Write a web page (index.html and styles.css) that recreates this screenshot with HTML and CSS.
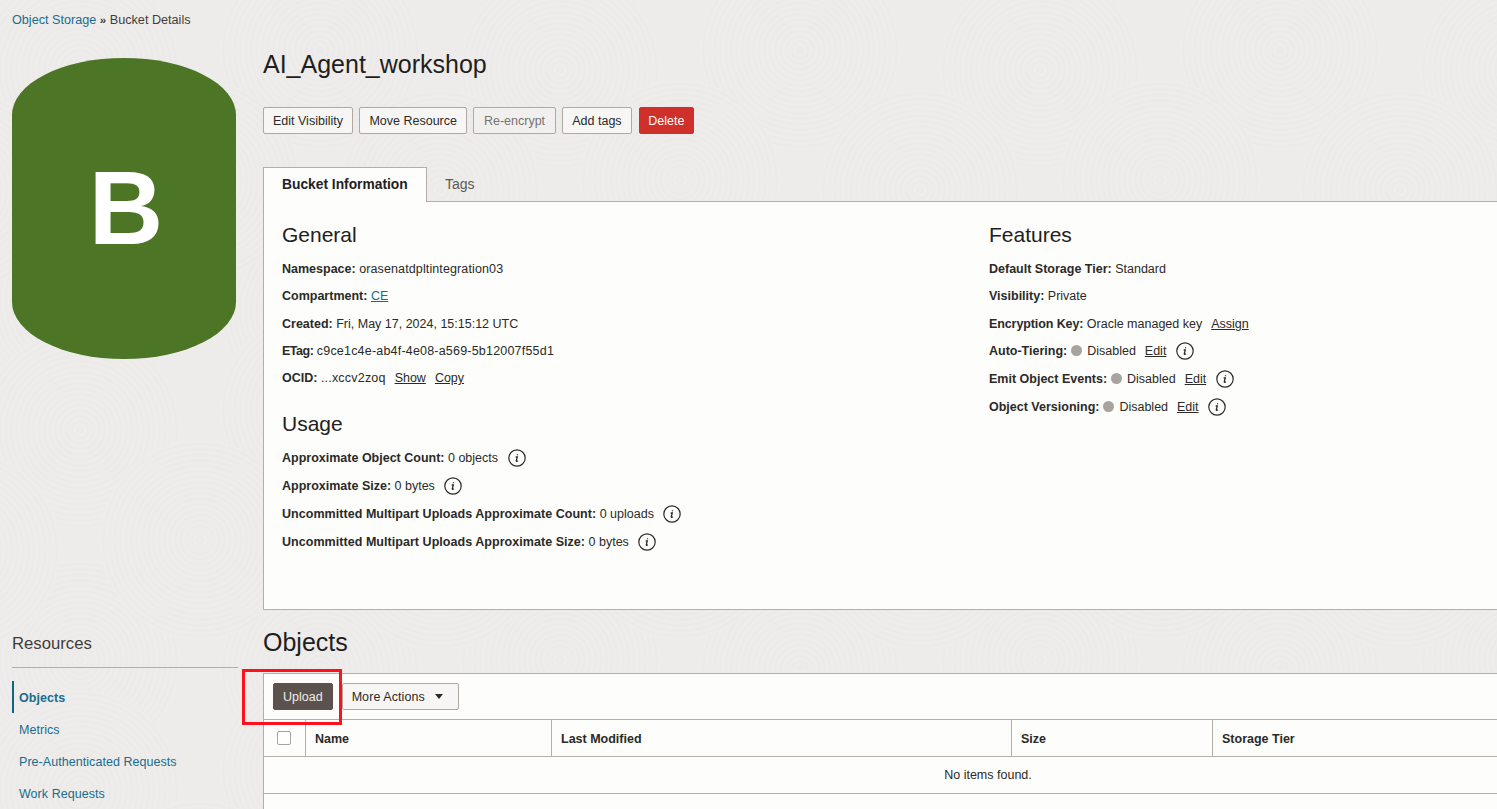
FILE: index.html
```html
<!DOCTYPE html>
<html lang="en">
<head>
<meta charset="utf-8">
<title>Bucket Details</title>
<link rel="stylesheet" href="styles.css">
</head>
<body>
<svg class="defs" width="0" height="0" aria-hidden="true">
  <symbol id="info" viewBox="0 0 18 18">
    <circle cx="9" cy="9" r="8.2" fill="none" stroke="#2b2a28" stroke-width="1.2"/>
    <path d="M9.5 5.3v.9M7.7 8h1.6l-1 3.6c-.2.8.5 1 1.6.2" fill="none" stroke="#2b2a28" stroke-width="1.3"/>
  </symbol>
</svg>
<nav class="crumbs"><a href="#">Object Storage</a> <span class="sep">»</span> Bucket Details</nav>
<div class="layout">
  <aside class="side">
    <div class="bucket">B</div>
    <h2 class="res-title">Resources</h2>
    <ul class="res-list">
      <li class="active"><a href="#">Objects</a></li>
      <li><a href="#">Metrics</a></li>
      <li><a href="#">Pre-Authenticated Requests</a></li>
      <li><a href="#">Work Requests</a></li>
    </ul>
  </aside>
  <main class="main">
    <h1 class="title">AI_Agent_workshop</h1>
    <div class="actions">
      <button class="btn">Edit Visibility</button>
      <button class="btn move">Move Resource</button>
      <button class="btn off">Re-encrypt</button>
      <button class="btn tags">Add tags</button>
      <button class="btn danger">Delete</button>
    </div>
    <div class="tabs">
      <div class="tab on">Bucket Information</div>
      <div class="tab">Tags</div>
    </div>
    <section class="panel">
      <div class="col-left">
        <h3 class="sub">General</h3>
        <p class="row"><b>Namespace:</b> <span class="sp1">orasenatdpltintegration03</span></p>
        <p class="row"><b>Compartment:</b> <a class="teal" href="#">CE</a></p>
        <p class="row"><b>Created:</b> Fri, May 17, 2024, 15:15:12 UTC</p>
        <p class="row"><b class="tight">ETag:</b> <span class="sp2">c9ce1c4e-ab4f-4e08-a569-5b12007f55d1</span></p>
        <p class="row"><b>OCID:</b> <span class="sp2">...xccv2zoq</span> <a class="lnk" href="#">Show</a> <a class="lnk" href="#">Copy</a></p>
        <h3 class="sub usage">Usage</h3>
        <p class="row tall"><b>Approximate Object Count:</b> 0 objects <svg class="ico"><use href="#info"/></svg></p>
        <p class="row tall"><b>Approximate Size:</b> 0 bytes <svg class="ico"><use href="#info"/></svg></p>
        <p class="row tall"><b class="long">Uncommitted Multipart Uploads Approximate Count:</b> 0 uploads <svg class="ico"><use href="#info"/></svg></p>
        <p class="row tall"><b class="long">Uncommitted Multipart Uploads Approximate Size:</b> 0 bytes <svg class="ico"><use href="#info"/></svg></p>
      </div>
      <div class="col-right">
        <h3 class="sub">Features</h3>
        <p class="row"><b>Default Storage Tier:</b> Standard</p>
        <p class="row"><b>Visibility:</b> Private</p>
        <p class="row"><b class="narrow">Encryption Key:</b> Oracle managed key <a class="lnk" href="#">Assign</a></p>
        <p class="row"><b>Auto-Tiering:</b> <i class="dot"></i> Disabled <a class="lnk" href="#">Edit</a> <svg class="ico"><use href="#info"/></svg></p>
        <p class="row tall"><b>Emit Object Events:</b> <i class="dot"></i> Disabled <a class="lnk" href="#">Edit</a> <svg class="ico"><use href="#info"/></svg></p>
        <p class="row tall"><b>Object Versioning:</b> <i class="dot"></i> Disabled <a class="lnk" href="#">Edit</a> <svg class="ico"><use href="#info"/></svg></p>
      </div>
    </section>
    <h2 class="objects">Objects</h2>
    <section class="listing">
      <div class="mark"></div>
      <div class="toolbar">
        <button class="btn dark">Upload</button>
        <button class="btn more">More Actions <i class="caret"></i></button>
      </div>
      <table class="grid">
        <colgroup>
          <col class="c1"><col class="c2"><col class="c3"><col class="c4"><col class="c5">
        </colgroup>
        <thead>
          <tr>
            <th><span class="check"></span></th>
            <th>Name</th>
            <th>Last Modified</th>
            <th>Size</th>
            <th>Storage Tier</th>
          </tr>
        </thead>
        <tbody>
          <tr><td class="empty" colspan="5">No items found.</td></tr>
        </tbody>
      </table>
    </section>
  </main>
</div>
</body>
</html>
```
FILE: styles.css
```css
* { box-sizing: border-box; }
html, body { margin: 0; height: 100%; }
body {
  height: 809px;
  overflow: hidden;
  font-family: "Liberation Sans", Arial, sans-serif;
  font-size: 12.5px;
  color: #2b2a28;
  background-color: #edecea;
  background-image: url("data:image/svg+xml,<svg xmlns='http://www.w3.org/2000/svg' width='480' height='360'><defs><radialGradient id='w' cx='.5' cy='.5' r='.0275' spreadMethod='repeat'><stop offset='0' stop-color='%23eeedeb'/><stop offset='.5' stop-color='%23ebeae8'/><stop offset='1' stop-color='%23eeedeb'/></radialGradient></defs><g fill='url(%23w)'><circle cx='80' cy='300' r='100'/><circle cx='80' cy='-60' r='100'/><circle cx='560' cy='300' r='100'/><circle cx='560' cy='-60' r='100'/><circle cx='320' cy='310' r='100'/><circle cx='320' cy='-50' r='100'/><circle cx='80' cy='70' r='100'/><circle cx='560' cy='70' r='100'/><circle cx='80' cy='430' r='100'/><circle cx='560' cy='430' r='100'/><circle cx='320' cy='50' r='100'/><circle cx='320' cy='410' r='100'/><circle cx='440' cy='190' r='100'/><circle cx='-40' cy='190' r='100'/><circle cx='200' cy='180' r='100'/></g></svg>");
}
.defs { position: absolute; }
a { color: inherit; }
.crumbs { height: 39px; padding: 13px 12px 0; line-height: 14px; font-size: 12.65px; color: #3f3d3a; }
.crumbs a { color: #1a6c8e; text-decoration: none; }
.sep { font-size: 11.5px; font-weight: 700; }
.layout { display: flex; }
.side { width: 263px; padding-left: 12px; flex: none; }
.bucket {
  width: 224px;
  height: 301px;
  margin-top: 19px;
  padding-left: 4px;
  background: #4c7525;
  border-radius: 112px / 57px;
  color: #fff;
  font-weight: 700;
  font-size: 103px;
  display: flex;
  align-items: center;
  justify-content: center;
  line-height: 1;
}
.res-title {
  margin: 274px 0 0;
  width: 226px;
  height: 35px;
  padding-top: 1px;
  font-size: 16.7px;
  line-height: 20px;
  font-weight: 400;
  color: #3f3d3a;
  border-bottom: 1px solid #b5aea7;
}
.res-list { list-style: none; margin: 13px 0 0; padding: 0; letter-spacing: .05px; }
.res-list li { height: 32px; line-height: 35px; padding-left: 7px; }
.res-list a { color: #1a6c8e; text-decoration: none; }
.res-list .active { border-left: 2px solid #0f6582; padding-left: 5px; font-weight: 700; }
.main { flex: 1; min-width: 0; }
.title { margin: 10px 0 0; font-size: 25px; line-height: 30px; font-weight: 400; color: #1f1e1c; }
.actions { display: flex; gap: 6.2px; margin-top: 28px; }
.btn {
  height: 27px;
  padding: 0 9px;
  font: 12.5px "Liberation Sans", Arial, sans-serif;
  color: #2b2a28;
  background: #f7f6f4;
  border: 1px solid #b0a9a2;
  border-radius: 2px;
}
.move { padding: 0 9.3px; }
.off { color: #77736e; background: #f1f0ee; padding: 0 9.5px; }
.tags { padding: 0 9.5px; }
.danger { background: #d0302a; border-color: #d0302a; color: #fff; padding: 0 8.5px; margin-left: .5px; }
.dark { background: #5c524d; border-color: #5c524d; color: #efece8; }
.more { display: flex; align-items: center; gap: 10px; padding-right: 15px; letter-spacing: .08px; }
.caret { width: 0; height: 0; border: 4.5px solid transparent; border-top: 5px solid #2b2a28; border-bottom: 0; }
.tabs { display: flex; margin-top: 33px; height: 35px; position: relative; z-index: 1; }
.tab { padding: 0 18px; line-height: 34px; font-size: 14px; color: #5c5955; white-space: nowrap; }
.tab.on {
  width: 164px;
  background: #fdfdfb;
  border: 1px solid #b5aea7;
  border-bottom: 0;
  font-size: 13.8px;
  font-weight: 700;
  color: #22211f;
}
.panel {
  display: flex;
  height: 409px;
  margin-top: -1px;
  background: #fdfdfb;
  border: 1px solid #b5aea7;
  border-right: 0;
  padding: 19px 0 0 18px;
}
.col-left { width: 707px; flex: none; }
.sub { margin: 0 0 7px; font-size: 21px; line-height: 28px; font-weight: 400; color: #22211f; }
.usage { margin-top: 18px; margin-bottom: 5.5px; }
.row { margin: 0; height: 27px; line-height: 27px; white-space: nowrap; }
.row:nth-of-type(2) { margin-bottom: 1px; }
.col-right .row:nth-of-type(4) { margin-bottom: 1px; }
.row.tall { height: 28px; line-height: 28px; margin-bottom: 0; }
.col-right .row.tall { line-height: 27px; }
.sp1 { letter-spacing: .12px; }
.sp2 { letter-spacing: .2px; }
.tight { letter-spacing: -.5px; }
.long { letter-spacing: .045px; }
.narrow { letter-spacing: -.1px; }
.teal { color: #1a6c8e; }
.lnk { color: #2b2a28; margin-left: 5.5px; }
.dot { display: inline-block; width: 11px; height: 11px; border-radius: 50%; background: #a8a39c; vertical-align: -1px; margin: 0 2px 0 0; }
.ico { width: 18px; height: 18px; vertical-align: -5px; margin-left: 6px; }
.objects { margin: 16px 0 0; font-size: 25px; line-height: 32px; font-weight: 400; color: #1f1e1c; }
.listing {
  position: relative;
  margin-top: 15px;
  background: #fdfdfb;
  border: 1px solid #b5aea7;
  border-right: 0;
  height: 200px;
}
.mark {
  position: absolute;
  left: -22px;
  top: -5px;
  width: 100px;
  height: 56px;
  border: 3px solid #fc111c;
  z-index: 2;
}
.toolbar { display: flex; gap: 9px; padding: 9px 9px 0; height: 45px; }
.grid { width: 1448px; table-layout: fixed; border-collapse: collapse; }
.c1 { width: 41px; }
.c2 { width: 246px; }
.c3 { width: 460px; }
.c4 { width: 201px; }
.grid th {
  height: 37px;
  padding: 1px 9.5px 0;
  text-align: left;
  font-weight: 700;
  border-top: 1px solid #b5aea7;
  border-bottom: 1px solid #b5aea7;
  border-left: 1px solid #b5aea7;
}
.grid th:first-child { border-left: 0; padding: 0 0 0 13px; }
.check { display: block; width: 14px; height: 14px; background: #fff; border: 1px solid #a8a39c; border-radius: 2px; }
.empty { height: 37px; text-align: center; border-bottom: 1px solid #b5aea7; }
```
